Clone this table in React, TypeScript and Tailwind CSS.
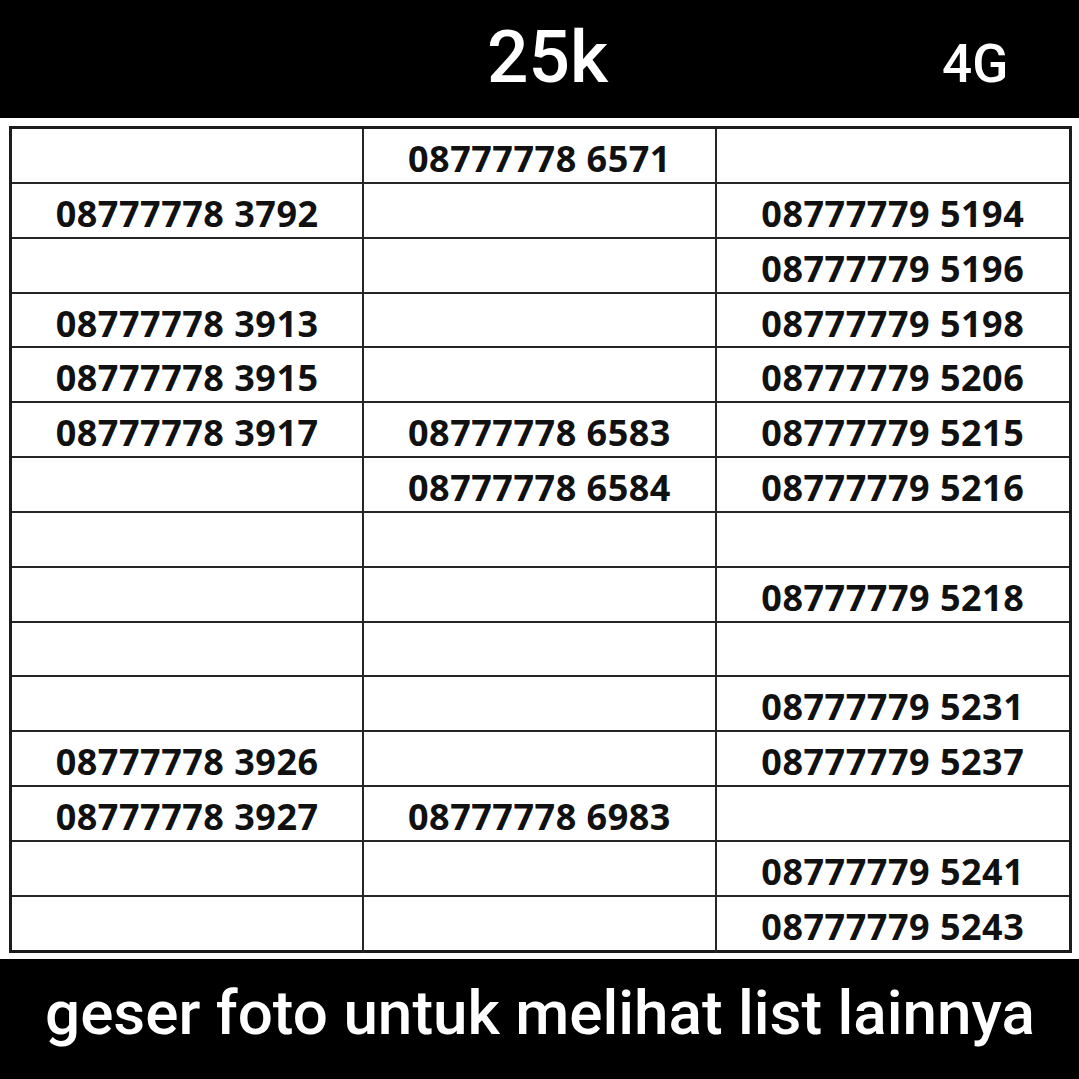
import React from 'react';

const rows: string[][] = [
  ['', '08777778 6571', ''],
  ['08777778 3792', '', '08777779 5194'],
  ['', '', '08777779 5196'],
  ['08777778 3913', '', '08777779 5198'],
  ['08777778 3915', '', '08777779 5206'],
  ['08777778 3917', '08777778 6583', '08777779 5215'],
  ['', '08777778 6584', '08777779 5216'],
  ['', '', ''],
  ['', '', '08777779 5218'],
  ['', '', ''],
  ['', '', '08777779 5231'],
  ['08777778 3926', '', '08777779 5237'],
  ['08777778 3927', '08777778 6983', ''],
  ['', '', '08777779 5241'],
  ['', '', '08777779 5243'],
];

const App: React.FC = () => {
  return (
    <div className="w-[1079px] h-[1079px] bg-white flex flex-col overflow-hidden">
      {/* Header */}
      <div className="h-[118px] bg-black flex items-baseline pt-[21px] pl-[487px] text-white font-['Roboto',sans-serif] font-medium leading-none">
        <span className="text-[73px]">25k</span>
        <span className="text-[53px] ml-[334px]">4G</span>
      </div>

      {/* Number table */}
      <div className="mt-[8px] ml-[9px] w-[1063px] border-[3px] border-[#1c1c1c] flex flex-col">
        {rows.map((row, i) => (
          <div
            key={i}
            className={
              i === rows.length - 1
                ? 'grid grid-cols-3 h-[53px]'
                : 'grid grid-cols-3 h-[54.85px] border-b-2 border-[#262626]'
            }
          >
            {row.map((num, j) => (
              <div
                key={j}
                className={
                  j < 2
                    ? 'border-r-2 border-[#262626] flex items-center justify-center'
                    : 'flex items-center justify-center'
                }
              >
                <span className="font-['Noto_Sans',sans-serif] font-bold text-[36px] tracking-[0.5px] text-[#111] leading-[52px] pt-[4px]">
                  {num}
                </span>
              </div>
            ))}
          </div>
        ))}
      </div>

      {/* Footer */}
      <div className="mt-[6px] h-[120px] bg-black pt-[23px] pl-[45px] text-white font-['Roboto',sans-serif] font-medium text-[62px] leading-none whitespace-nowrap">
        geser foto untuk melihat list lainnya
      </div>
    </div>
  );
};

export default App;
